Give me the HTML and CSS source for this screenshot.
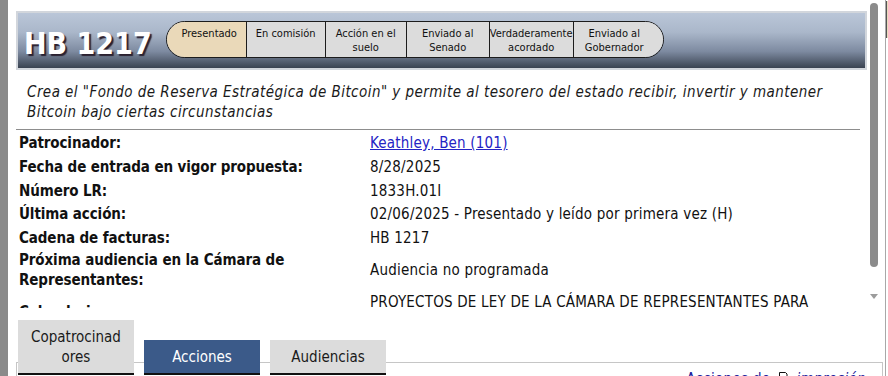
FILE: index.html
```html
<!DOCTYPE html>
<html lang="es">
<head>
<meta charset="UTF-8">
<meta name="viewport" content="width=device-width, initial-scale=1.0">
<title>HB 1217 - Detalles del proyecto de ley</title>
<link rel="stylesheet" href="styles.css">
</head>
<body>

<div class="main">
    <div class="bill-wrap">
        <div class="bill-scroll">
            <div class="bill-head">
                <h1 class="bill-no">HB 1217</h1>
                <ul class="steps">
                    <li class="step current" style="width:79px">Presentado</li>
                    <li class="step" style="width:79px">En comisión</li>
                    <li class="step" style="width:81px">Acción en el suelo</li>
                    <li class="step" style="width:83px">Enviado al Senado</li>
                    <li class="step" style="width:84px">Verdaderamente acordado</li>
                    <li class="step" style="width:90px">Enviado al Gobernador</li>
                </ul>
            </div>

            <p class="summary">Crea el "Fondo de Reserva Estratégica de Bitcoin" y permite al tesorero del estado recibir, invertir y mantener Bitcoin bajo ciertas circunstancias</p>
            <hr class="rule">

            <table class="details">
                <tr class="first">
                    <th>Patrocinador:</th>
                    <td><a href="#">Keathley, Ben (101)</a></td>
                </tr>
                <tr>
                    <th>Fecha de entrada en vigor propuesta:</th>
                    <td>8/28/2025</td>
                </tr>
                <tr>
                    <th>Número LR:</th>
                    <td>1833H.01I</td>
                </tr>
                <tr>
                    <th>Última acción:</th>
                    <td>02/06/2025 - Presentado y leído por primera vez (H)</td>
                </tr>
                <tr>
                    <th>Cadena de facturas:</th>
                    <td>HB 1217</td>
                </tr>
                <tr class="tight">
                    <th>Próxima audiencia en la Cámara de Representantes:</th>
                    <td>Audiencia no programada</td>
                </tr>
                <tr>
                    <th>Calendario:</th>
                    <td>PROYECTOS DE LEY DE LA CÁMARA DE REPRESENTANTES PARA PERFECCIONAMIENTO</td>
                </tr>
            </table>
        </div>
        <div class="vscroll">
            <div class="vscroll-thumb"></div>
            <div class="vscroll-down"></div>
        </div>
    </div>

    <div class="tabs">
        <div class="tab">Copatrocinad<br>ores</div>
        <div class="tab active">Acciones</div>
        <div class="tab">Audiencias</div>
    </div>

    <div class="tab-panel">
        <div class="print-link">
            <a href="#">Acciones de</a>
            <svg class="printer" width="16" height="16" viewBox="0 0 16 16">
                <path d="M4.5 6.5V1.5h6l1.5 1.5v3.5" fill="#fff" stroke="#111" stroke-width="1"/>
                <rect x="0.5" y="6.5" width="15" height="5" fill="#fff" stroke="#111" stroke-width="1"/>
                <rect x="4.5" y="9.5" width="7" height="6" fill="#fff" stroke="#111" stroke-width="1"/>
            </svg>
            <a href="#" class="alt">impresión</a>
        </div>
    </div>
</div>

<div class="side">
    <div class="side-pill"></div>
</div>

</body>
</html>
```

FILE: styles.css
```css
* {
    margin: 0;
    padding: 0;
    box-sizing: border-box;
}
body {
    font-family: "DejaVu Sans Condensed", "DejaVu Sans", sans-serif;
    font-stretch: semi-condensed;
    font-size: 15px;
    color: #111;
    background: #fff;
    display: flex;
    height: 376px;
    overflow: hidden;
    border-left: 8px solid #8a8a8a;
}
.main {
    width: 876px;
    flex: none;
}
.side {
    flex: 1;
    border-left: 1px solid #a8a8a8;
    margin-left: 1px;
    padding-top: 1px;
}
.side-pill {
    height: 37px;
    background: #eadcbf;
    border-left: 1px solid #555;
}

/* bill summary, cut by its own scroll box */
.bill-wrap {
    display: flex;
    height: 308px;
}
.bill-scroll {
    flex: none;
    width: 860px;
    overflow: hidden;
    padding-left: 8px;
}
.vscroll {
    flex: none;
    width: 12px;
    display: flex;
    flex-direction: column;
    align-items: center;
}
.vscroll-thumb {
    width: 8px;
    height: 264px;
    margin-top: 3px;
    border-radius: 4px;
    background: #8b8b8b;
}
.vscroll-down {
    margin-top: auto;
    margin-bottom: 9px;
    border-left: 4px solid transparent;
    border-right: 4px solid transparent;
    border-top: 5px solid #9c9c9c;
}

.bill-head {
    display: flex;
    align-items: flex-start;
    margin: 11px 1px 0 0;
    height: 59px;
    border: 2px solid #d2d6dc;
    background: linear-gradient(#bac6d8 0%, #aab7ca 35%, #7d8aa0 70%, #3a4351 100%);
}
.bill-no {
    font-size: 30px;
    line-height: 30px;
    font-weight: bold;
    color: #fff;
    text-shadow: 2px 2px 1px #2b2130;
    margin: 16px 0 0 6px;
    white-space: nowrap;
}
.steps {
    list-style: none;
    display: flex;
    height: 37px;
    margin: 8px 0 0 14px;
    border: 1px solid #1c1c1c;
    border-radius: 19px;
    overflow: hidden;
}
.step {
    flex: none;
    background: #dcdcdc;
    border-left: 1px solid #1c1c1c;
    font-size: 11px;
    line-height: 14px;
    text-align: center;
    padding-top: 5px;
    white-space: normal;
}
.step:first-child {
    border-left: none;
    padding-left: 6px;
}
.step:last-child {
    padding-right: 8px;
}
.step.current {
    background: #ead9b9;
}

.summary {
    font-style: italic;
    line-height: 19.5px;
    letter-spacing: 0.45px;
    margin: 13px 0 0 11px;
    width: 830px;
    color: #1a1a1a;
}
.rule {
    border: none;
    border-top: 1px solid #8d8d8d;
    width: 844px;
    margin-top: 7px;
}

.details {
    border-collapse: collapse;
    width: 844px;
}
.details th,
.details td {
    padding: 2px 3px;
    line-height: 19.75px;
    vertical-align: middle;
    text-align: left;
}
.details .first th,
.details .first td {
    padding-top: 4px;
}
.details .tight th,
.details .tight td {
    padding-top: 0;
    padding-bottom: 1px;
}
.details th {
    width: 351px;
    font-weight: bold;
    letter-spacing: -0.1px;
}
.details td {
    letter-spacing: 0.2px;
}
.details a {
    color: #2323c4;
}

/* tabs */
.tabs {
    display: flex;
    align-items: flex-end;
    gap: 10px;
    padding-left: 10px;
    margin-top: 12px;
    margin-bottom: -13px;
    position: relative;
    z-index: 1;
}
.tab {
    width: 116px;
    background: #dcdcdc;
    text-align: center;
    line-height: 19.5px;
    padding: 8px 0 6px;
    border-bottom: 2px solid #111;
    color: #1a1a1a;
}
.tab.active {
    background: #3b5a89;
    color: #fff;
}
.tab-panel {
    margin: 0 1px 0 8px;
    height: 40px;
    border: 1px solid #c6c6c6;
    border-bottom: none;
    display: flex;
    justify-content: flex-end;
    padding: 6px 16px 0 0;
}
.print-link {
    display: flex;
    align-items: center;
    gap: 5px;
    height: 20px;
}
.print-link a {
    color: #22229c;
    text-decoration: none;
    letter-spacing: 0.3px;
}
.print-link a.alt {
    font-style: italic;
    text-decoration: underline;
}
```
